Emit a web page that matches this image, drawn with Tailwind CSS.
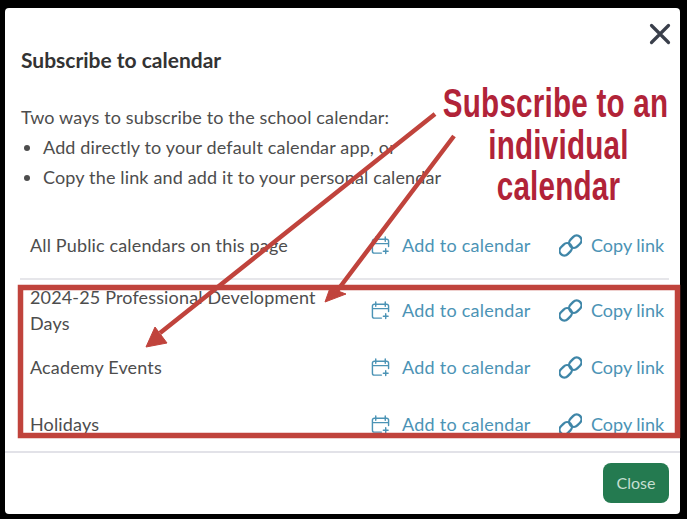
<!DOCTYPE html>
<html lang="en">
<head>
<meta charset="UTF-8">
<title>Subscribe to calendar</title>
<script src="https://cdn.jsdelivr.net/npm/@tailwindcss/browser@4"></script>
</head>
<body class="bg-black h-[519px] w-[687px] overflow-hidden pt-2 pl-[5px] pr-[7px] pb-[5px] font-['Lato',sans-serif] text-[18px] tracking-[0.15px] text-[#4d4d4d]">

<div class="relative h-[506px] bg-white rounded-sm flex flex-col">
    <!-- header -->
    <div class="flex justify-between pl-4 pr-2 pt-[14px] h-[86px]">
        <h2 class="mt-[24px] text-[21px] tracking-normal leading-7 font-bold text-[#333]">Subscribe to calendar</h2>
        <svg class="w-6 h-6 text-[#3a3f4b]" viewBox="0 0 24 24" fill="none" stroke="currentColor" stroke-width="3.2" stroke-linecap="round"><path d="M3.500 3.500 L20.500 20.500 M20.500 3.500 L3.500 20.500"/></svg>
    </div>

    <div class="pl-4 h-[131px] leading-[30px]">
        <p class="pt-[8px]">Two ways to subscribe to the school calendar:</p>
        <ul class="list-disc pl-[22px]">
            <li>Add directly to your default calendar app, or</li>
            <li>Copy the link and add it to your personal calendar</li>
        </ul>
    </div>

    <!-- calendar rows -->
    <div class="ml-[15px] mr-[11px] pb-[13px] border-b-2 border-[#e6e6ea]">
        <div class="grid grid-cols-[341px_188px_1fr] items-center pl-[10px] h-[40px]">
            <span>All Public calendars on this page</span>
            <a class="flex items-center gap-3 tracking-[0.25px] text-[#4b93b5]"><svg class="w-[19px] h-[19px]" viewBox="0 0 20 20" fill="none" stroke="currentColor" stroke-width="1.5" stroke-linecap="round" stroke-linejoin="round"><path d="M11 18 H3.5 A2 2 0 0 1 1.5 16 V5 A2 2 0 0 1 3.5 3.5 H16.500 A2 2 0 0 1 18.500 5 V11 M1.500 8 H18.500 M5 1 V5.500 M15 1 V5.500 M7.500 3.500 H12.500 M15.500 13.500 V18.500 M13 16 H18"/></svg>Add to calendar</a>
            <a class="flex items-center gap-[9px] tracking-normal text-[#4b93b5]"><svg class="w-[23px] h-[23px] text-[#3f86a8]" viewBox="0 0 24 24" fill="none" stroke="currentColor" stroke-width="2.4"><rect x="10" y="3" width="14" height="10" rx="5" transform="rotate(-45 17 8)"/><rect x="0" y="11" width="14" height="10" rx="5" transform="rotate(-45 7 16)"/></svg>Copy link</a>
        </div>
    </div>

    <div class="pl-[25px] pr-[11px] pt-[4px] leading-[26px]">
        <div class="grid grid-cols-[341px_188px_1fr] items-center">
            <span class="w-[300px]">2024-25 Professional Development Days</span>
            <a class="flex items-center gap-3 tracking-[0.25px] text-[#4b93b5]"><svg class="w-[19px] h-[19px]" viewBox="0 0 20 20" fill="none" stroke="currentColor" stroke-width="1.5" stroke-linecap="round" stroke-linejoin="round"><path d="M11 18 H3.5 A2 2 0 0 1 1.5 16 V5 A2 2 0 0 1 3.5 3.5 H16.500 A2 2 0 0 1 18.500 5 V11 M1.500 8 H18.500 M5 1 V5.500 M15 1 V5.500 M7.500 3.500 H12.500 M15.500 13.500 V18.500 M13 16 H18"/></svg>Add to calendar</a>
            <a class="flex items-center gap-[9px] tracking-normal text-[#4b93b5]"><svg class="w-[23px] h-[23px] text-[#3f86a8]" viewBox="0 0 24 24" fill="none" stroke="currentColor" stroke-width="2.4"><rect x="10" y="3" width="14" height="10" rx="5" transform="rotate(-45 17 8)"/><rect x="0" y="11" width="14" height="10" rx="5" transform="rotate(-45 7 16)"/></svg>Copy link</a>
        </div>
        <div class="grid grid-cols-[341px_188px_1fr] items-center mt-[18px]">
            <span>Academy Events</span>
            <a class="flex items-center gap-3 tracking-[0.25px] text-[#4b93b5]"><svg class="w-[19px] h-[19px]" viewBox="0 0 20 20" fill="none" stroke="currentColor" stroke-width="1.5" stroke-linecap="round" stroke-linejoin="round"><path d="M11 18 H3.5 A2 2 0 0 1 1.5 16 V5 A2 2 0 0 1 3.5 3.5 H16.500 A2 2 0 0 1 18.500 5 V11 M1.500 8 H18.500 M5 1 V5.500 M15 1 V5.500 M7.500 3.500 H12.500 M15.500 13.500 V18.500 M13 16 H18"/></svg>Add to calendar</a>
            <a class="flex items-center gap-[9px] tracking-normal text-[#4b93b5]"><svg class="w-[23px] h-[23px] text-[#3f86a8]" viewBox="0 0 24 24" fill="none" stroke="currentColor" stroke-width="2.4"><rect x="10" y="3" width="14" height="10" rx="5" transform="rotate(-45 17 8)"/><rect x="0" y="11" width="14" height="10" rx="5" transform="rotate(-45 7 16)"/></svg>Copy link</a>
        </div>
        <div class="grid grid-cols-[341px_188px_1fr] items-center mt-[31px]">
            <span>Holidays</span>
            <a class="flex items-center gap-3 tracking-[0.25px] text-[#4b93b5]"><svg class="w-[19px] h-[19px]" viewBox="0 0 20 20" fill="none" stroke="currentColor" stroke-width="1.5" stroke-linecap="round" stroke-linejoin="round"><path d="M11 18 H3.5 A2 2 0 0 1 1.5 16 V5 A2 2 0 0 1 3.5 3.5 H16.500 A2 2 0 0 1 18.500 5 V11 M1.500 8 H18.500 M5 1 V5.500 M15 1 V5.500 M7.500 3.500 H12.500 M15.500 13.500 V18.500 M13 16 H18"/></svg>Add to calendar</a>
            <a class="flex items-center gap-[9px] tracking-normal text-[#4b93b5]"><svg class="w-[23px] h-[23px] text-[#3f86a8]" viewBox="0 0 24 24" fill="none" stroke="currentColor" stroke-width="2.4"><rect x="10" y="3" width="14" height="10" rx="5" transform="rotate(-45 17 8)"/><rect x="0" y="11" width="14" height="10" rx="5" transform="rotate(-45 7 16)"/></svg>Copy link</a>
        </div>
    </div>

    <!-- footer -->
    <div class="mt-[14px] border-t-2 border-[#e2e2e8] flex justify-end pr-[11px] pt-[10px]">
        <button class="w-[66px] h-[40px] rounded-lg bg-[#247a50] text-[#c5dfd0] text-[16px] tracking-normal">Close</button>
    </div>
</div>

<!-- annotation drawn over the dialog -->
<svg class="absolute left-0 top-0 w-[687px] h-[519px] pointer-events-none" viewBox="0 0 687 519" fill="none">
    <rect x="20.500" y="287.500" width="657" height="148" stroke="#c0433c" stroke-width="5.500"/>
    <path d="M435 114 L160 333 M454 136 L337 291" stroke="#c0433c" stroke-width="4.500"/>
    <path d="M146 347 L155 327 L167 343 Z M325 302 L330 288 L346 294 Z" fill="#c0433c" stroke="#c0433c" stroke-width="1"/>
</svg>
<div class="absolute left-[430px] top-[83px] w-[257px] flex flex-col items-center whitespace-nowrap scale-x-[0.74] font-['Liberation_Sans',sans-serif] font-bold text-[40px] leading-[41.500px] tracking-[0.3px] text-[#b12338]">
    <span class="mr-[8px]">Subscribe to an</span>
    <span>individual</span>
    <span>calendar</span>
</div>

</body>
</html>
